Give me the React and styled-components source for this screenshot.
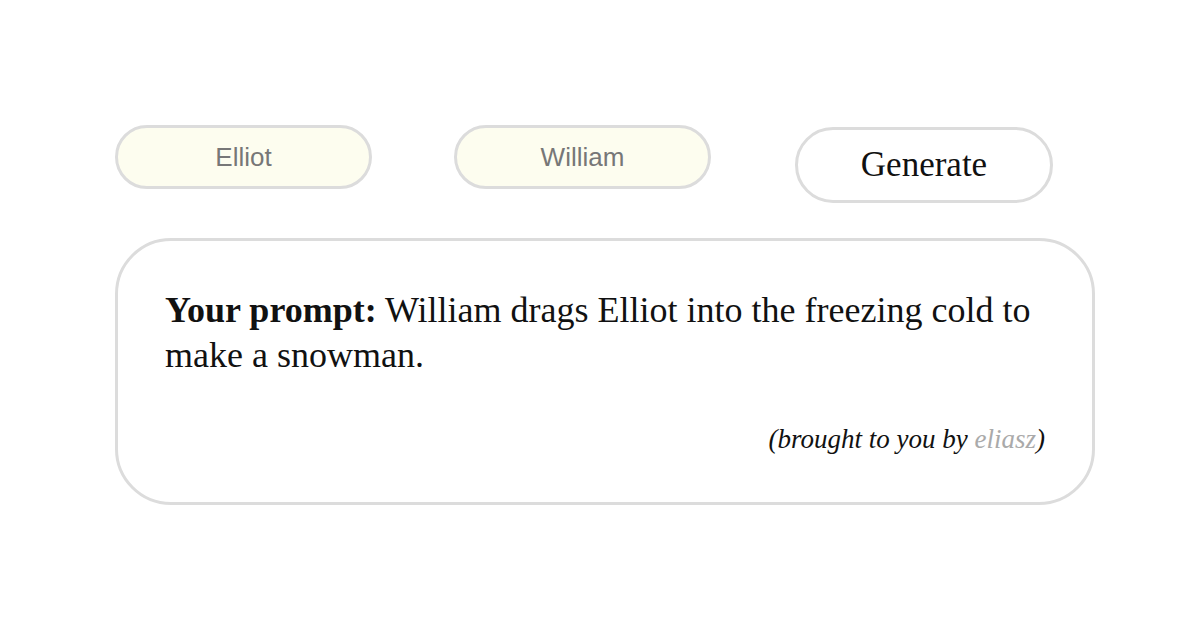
import styled, { createGlobalStyle } from "styled-components"

const Global = createGlobalStyle`
body {
  margin: 0;
  background: #ffffff;
  font-family: "Liberation Serif", "Times New Roman", serif;
}
`

const Page = styled.div`
padding: 125px 0 0 115px;
width: 980px;
`

const Row = styled.div`
display: flex;
align-items: flex-start;
gap: 82px;
`

const NameInput = styled.input`
box-sizing: border-box;
width: 257px;
height: 64px;
border: 3px solid #dcdcdc;
border-radius: 32px;
background: #fdfdef;
color: #777777;
font-family: "Liberation Sans", Arial, sans-serif;
font-size: 26px;
text-align: center;
outline: none;
`

const GenerateButton = styled.button`
box-sizing: border-box;
width: 258px;
height: 76px;
margin-top: 2px;
margin-left: 2px;
border: 3px solid #dcdcdc;
border-radius: 38px;
background: #ffffff;
color: #111111;
font-family: "Liberation Serif", "Times New Roman", serif;
font-size: 35px;
`

const Card = styled.div`
box-sizing: border-box;
margin-top: 35px;
width: 980px;
height: 267px;
border: 3px solid #dcdcdc;
border-radius: 56px;
padding: 47px 47px 0 47px;
display: flex;
flex-direction: column;
`

const Prompt = styled.p`
margin: 0;
font-size: 36px;
line-height: 45px;
color: #111111;
`

const Label = styled.b`
font-weight: bold;
`

const Credit = styled.p`
margin: 46px 0 0 0;
text-align: right;
font-style: italic;
font-size: 27px;
line-height: 30px;
color: #111111;
`

const Author = styled.span`
color: #aaaaaa;
`

const App = () => {
  return (
    <Page>
      <Global />
      <Row>
        <NameInput defaultValue="Elliot" />
        <NameInput defaultValue="William" />
        <GenerateButton>Generate</GenerateButton>
      </Row>
      <Card>
        <Prompt>
          <Label>Your prompt:</Label> William drags Elliot into the freezing cold to make a snowman.
        </Prompt>
        <Credit>
          (brought to you by <Author>eliasz</Author>)
        </Credit>
      </Card>
    </Page>
  )
}

export default App
